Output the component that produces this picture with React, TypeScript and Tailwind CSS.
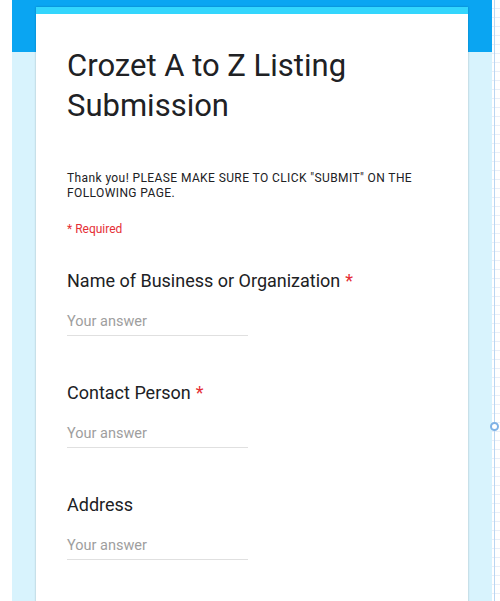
export default function App() {
  const fields = [
    { label: "Name of Business or Organization", required: true },
    { label: "Contact Person", required: true },
    { label: "Address", required: false },
  ];

  const gridLines = Array.from({ length: 70 });

  return (
    <div className="flex h-[601px] w-[500px] overflow-hidden bg-white font-['Roboto',_'Liberation_Sans',_sans-serif]">
      <div className="w-[12px] shrink-0 bg-white" />

      <div className="relative w-[480px] shrink-0 bg-[#d8f3fd]">
        <div className="absolute left-0 right-0 top-0 h-[52px] bg-[#0aa5f2]" />

        <div className="relative ml-[24px] mt-[7px] w-[432px] h-[620px] bg-white shadow-[0_0_2px_rgba(0,0,0,0.25)]">
          <div className="h-[7px] bg-[#33d6fd]" />
          <div className="px-[31px]">
            <h1 className="mt-[32px] text-[31px] leading-[40px] text-[#202124]">
              Crozet A to Z Listing Submission
            </h1>
            <p className="mt-[45px] text-[12px] leading-[15px] tracking-[0.4px] text-[#202124]">
              Thank you! PLEASE MAKE SURE TO CLICK "SUBMIT" ON THE FOLLOWING PAGE.
            </p>
            <p className="mt-[20px] text-[12px] leading-[16px] text-[#e52f36]">* Required</p>

            <div className="mt-[32px] flex flex-col gap-[45px]">
              {fields.map((f) => (
                <div key={f.label} className="flex flex-col">
                  <div className="text-[18px] leading-[24px] text-[#202124]">
                    {f.label}
                    {f.required && <span className="ml-[5px] text-[#e52f36]">*</span>}
                  </div>
                  <div className="mt-[19px] w-[181px] border-b border-[#e0e0e0] pb-[3px] text-[14.5px] leading-[20px] text-[#9e9e9e]">
                    Your answer
                  </div>
                </div>
              ))}
            </div>
          </div>
        </div>
      </div>

      <div className="relative flex-1 bg-white">
        <div className="absolute left-[2px] top-0 bottom-0 w-[1px] bg-[#b9d6f2]" />
        <div className="flex flex-col">
          {gridLines.map((_, i) => (
            <div key={i} className="h-[9px] border-b border-[#e8eff8]" />
          ))}
        </div>
        <div className="absolute left-[-2px] top-[422px] h-[9px] w-[9px] rounded-full border-2 border-[#7fb2e6] bg-white" />
      </div>
    </div>
  );
}
